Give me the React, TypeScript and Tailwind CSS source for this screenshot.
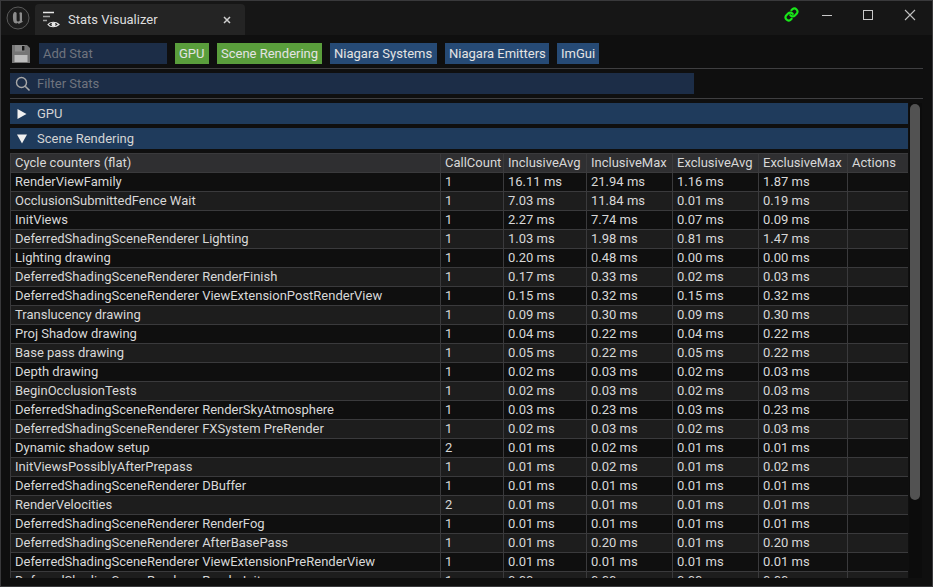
import React from "react";

const rows: string[][] = [
  ["RenderViewFamily", "1", "16.11 ms", "21.94 ms", "1.16 ms", "1.87 ms"],
  ["OcclusionSubmittedFence Wait", "1", "7.03 ms", "11.84 ms", "0.01 ms", "0.19 ms"],
  ["InitViews", "1", "2.27 ms", "7.74 ms", "0.07 ms", "0.09 ms"],
  ["DeferredShadingSceneRenderer Lighting", "1", "1.03 ms", "1.98 ms", "0.81 ms", "1.47 ms"],
  ["Lighting drawing", "1", "0.20 ms", "0.48 ms", "0.00 ms", "0.00 ms"],
  ["DeferredShadingSceneRenderer RenderFinish", "1", "0.17 ms", "0.33 ms", "0.02 ms", "0.03 ms"],
  ["DeferredShadingSceneRenderer ViewExtensionPostRenderView", "1", "0.15 ms", "0.32 ms", "0.15 ms", "0.32 ms"],
  ["Translucency drawing", "1", "0.09 ms", "0.30 ms", "0.09 ms", "0.30 ms"],
  ["Proj Shadow drawing", "1", "0.04 ms", "0.22 ms", "0.04 ms", "0.22 ms"],
  ["Base pass drawing", "1", "0.05 ms", "0.22 ms", "0.05 ms", "0.22 ms"],
  ["Depth drawing", "1", "0.02 ms", "0.03 ms", "0.02 ms", "0.03 ms"],
  ["BeginOcclusionTests", "1", "0.02 ms", "0.03 ms", "0.02 ms", "0.03 ms"],
  ["DeferredShadingSceneRenderer RenderSkyAtmosphere", "1", "0.03 ms", "0.23 ms", "0.03 ms", "0.23 ms"],
  ["DeferredShadingSceneRenderer FXSystem PreRender", "1", "0.02 ms", "0.03 ms", "0.02 ms", "0.03 ms"],
  ["Dynamic shadow setup", "2", "0.01 ms", "0.02 ms", "0.01 ms", "0.01 ms"],
  ["InitViewsPossiblyAfterPrepass", "1", "0.01 ms", "0.02 ms", "0.01 ms", "0.02 ms"],
  ["DeferredShadingSceneRenderer DBuffer", "1", "0.01 ms", "0.01 ms", "0.01 ms", "0.01 ms"],
  ["RenderVelocities", "2", "0.01 ms", "0.01 ms", "0.01 ms", "0.01 ms"],
  ["DeferredShadingSceneRenderer RenderFog", "1", "0.01 ms", "0.01 ms", "0.01 ms", "0.01 ms"],
  ["DeferredShadingSceneRenderer AfterBasePass", "1", "0.01 ms", "0.20 ms", "0.01 ms", "0.20 ms"],
  ["DeferredShadingSceneRenderer ViewExtensionPreRenderView", "1", "0.01 ms", "0.01 ms", "0.01 ms", "0.01 ms"],
  ["DeferredShadingSceneRenderer RenderInit", "1", "0.00 ms", "0.00 ms", "0.00 ms", "0.00 ms"],
];

const header = ["Cycle counters (flat)", "CallCount", "InclusiveAvg", "InclusiveMax", "ExclusiveAvg", "ExclusiveMax", "Actions"];

function Row({ cells, bg }: { cells: string[]; bg: string }) {
  return (
    <div className={`grid grid-cols-[430px_63px_83px_86px_86px_89px_61px] h-[19px] shrink-0 border-b border-[#3a3a3c] ${bg}`}>
      {cells.map((c, i) => (
        <div
          key={i}
          className={`pl-1 leading-[18px] whitespace-nowrap overflow-hidden ${i < 6 ? "border-r border-[#3a3a3c]" : ""}`}
        >
          {c}
        </div>
      ))}
    </div>
  );
}

function Chip({ label, green, width }: { label: string; green?: boolean; width: string }) {
  return (
    <div className={`h-[21px] pl-1 leading-[21px] whitespace-nowrap overflow-hidden ${width} ${green ? "bg-[#5a9e3c]" : "bg-[#264a75]"} text-[#e4e4e4]`}>
      {label}
    </div>
  );
}

function Section({ label, open }: { label: string; open?: boolean }) {
  return (
    <div className="h-[21px] w-[899px] bg-[#1f3b5c] flex items-center text-[#d4d4d4] shrink-0">
      <svg width="10" height="10" viewBox="0 0 10 10" className="ml-[7px] mr-[10px]">
        {open ? <path d="M0 0.5H10L5 9.5Z" fill="#f0f0f0" /> : <path d="M0.5 0L9.5 5L0.5 10Z" fill="#f0f0f0" />}
      </svg>
      <span>{label}</span>
    </div>
  );
}

export default function App() {
  return (
    <div className="w-[933px] h-[587px] overflow-hidden bg-[#0f0f0f] border border-[#39393b] flex flex-col text-[13px] text-[#d6d6d6] font-['Roboto',sans-serif] antialiased">
      {/* Title bar */}
      <div className="h-[34px] bg-[#161616] flex items-end shrink-0">
        <div className="w-[34px] h-[34px] flex items-center justify-center">
          <svg width="24" height="24" viewBox="0 0 24 24">
            <circle cx="12" cy="12" r="11" fill="#1c1c1c" stroke="#5a5a5a" strokeWidth="1" />
            <path d="M8 6.5C6.8 8 6.8 9.5 7.2 14.5C7.5 17 10 18.5 12 16.8L12.6 18L17 15.8L16 15V6.8C15 6 14 6 13.2 7C13.8 7.8 13.8 9 13.8 14.5C13 15.8 11 15.8 10.6 14.2V7C10 6 8.8 5.8 8 6.5Z" fill="#8c8c8c" />
          </svg>
        </div>
        <div className="w-[210px] h-[31px] bg-[#242424] rounded-t-[4px] flex items-center">
          <svg width="18" height="20" viewBox="0 0 18 20" className="ml-2 mr-[7px]">
            <path d="M0 2.5H11" stroke="#e8e8e8" strokeWidth="1.5" fill="none" />
            <path d="M0 6.5H7" stroke="#a0a0a0" strokeWidth="1.5" fill="none" />
            <path d="M0 10.5H4" stroke="#a0a0a0" strokeWidth="1.5" fill="none" />
            <path d="M5 14.5C7 11.5 13 11.5 16 14.5C13 17.5 7 17.5 5 14.5Z" stroke="#e8e8e8" strokeWidth="1.2" fill="none" />
            <circle cx="10.5" cy="14.5" r="2" fill="#e8e8e8" />
          </svg>
          <span className="text-[#dedede]">Stats Visualizer</span>
          <svg width="8" height="8" viewBox="0 0 8 8" className="ml-[65px]">
            <path d="M1 1L7 7M7 1L1 7" stroke="#cfcfcf" strokeWidth="1.5" />
          </svg>
        </div>
        <div className="ml-auto h-full flex items-center">
          <svg width="15" height="15" viewBox="0 0 24 24" fill="none" stroke="#19e619" strokeWidth="3.4" strokeLinecap="round" strokeLinejoin="round" className="mr-[22px] mb-[7px]">
            <path d="M10 13a5 5 0 0 0 7.5.5l3-3a5 5 0 0 0-7-7l-1.7 1.7" />
            <path d="M14 11a5 5 0 0 0-7.5-.5l-3 3a5 5 0 0 0 7 7l1.7-1.7" />
          </svg>
          <svg width="12" height="12" viewBox="0 0 12 12" className="mr-[29px] mb-[6px]">
            <path d="M1 6.5H11" stroke="#c8c8c8" strokeWidth="1" />
          </svg>
          <svg width="12" height="12" viewBox="0 0 12 12" className="mr-[30px] mb-[6px]">
            <rect x="1.5" y="1.5" width="9" height="9" fill="none" stroke="#c8c8c8" strokeWidth="1" />
          </svg>
          <svg width="12" height="12" viewBox="0 0 12 12" className="mr-[16px] mb-[7px]">
            <path d="M1 1L11 11M11 1L1 11" stroke="#c0c0c0" strokeWidth="1.1" />
          </svg>
        </div>
      </div>

      {/* Toolbar */}
      <div className="h-[34px] mx-[9px] flex items-start shrink-0 border-b border-[#3f3f41] pt-[8px]">
        <svg width="20" height="20" viewBox="0 0 20 20" className="ml-[1px] mr-[8px] mt-[1px]">
          <path d="M1 1H16L19 4V19H1Z" fill="#757575" />
          <rect x="4" y="1" width="10" height="6.5" fill="#8c8c8c" />
          <rect x="11" y="2" width="2.5" height="4.5" fill="#161616" />
          <rect x="3.5" y="11" width="13" height="7" fill="#bdbdbd" />
        </svg>
        <div className="w-[128px] h-[21px] bg-[#1c2d47] pl-1 leading-[21px] text-[#6f747e] mr-2">Add Stat</div>
        <div className="flex gap-2">
          <Chip label="GPU" green width="w-[34px]" />
          <Chip label="Scene Rendering" green width="w-[105px]" />
          <Chip label="Niagara Systems" width="w-[107px]" />
          <Chip label="Niagara Emitters" width="w-[104px]" />
          <Chip label="ImGui" width="w-[42px]" />
        </div>
      </div>

      {/* Filter */}
      <div className="h-[30px] mx-[9px] pt-[4px] border-b border-[#3f3f41] shrink-0">
        <div className="w-[684px] h-[21px] bg-[#1c2d47] flex items-center text-[#6f747e]">
          <svg width="16" height="16" viewBox="0 0 16 16" className="ml-[5px] mr-[6px]">
            <circle cx="6.5" cy="6.5" r="5" fill="none" stroke="#a8a8a8" strokeWidth="1.4" />
            <path d="M10.2 10.2L14.5 14.5" stroke="#a8a8a8" strokeWidth="1.6" />
          </svg>
          <span>Filter Stats</span>
        </div>
      </div>

      {/* Body */}
      <div className="flex-1 min-h-0 flex pl-[9px] pt-1 pb-[8px] pr-[10px]">
        <div className="w-[899px] flex flex-col gap-1 overflow-hidden">
          <Section label="GPU" />
          <Section label="Scene Rendering" open />
          <div className="w-[899px] flex-1 min-h-0 overflow-hidden border-l border-r border-t border-[#3a3a3c] text-[#d8d8d8]">
            <Row cells={header} bg="bg-[#2f2f31]" />
            {rows.map((r, i) => (
              <Row key={i} cells={[...r, ""]} bg={i % 2 === 0 ? "bg-[#0f0f0f]" : "bg-[#1d1d1d]"} />
            ))}
          </div>
        </div>
        <div className="w-[13px] ml-[1px] pl-[1px] pr-[2px] pt-[1px] bg-[#0c0c0c]">
          <div className="h-[396px] bg-[#525252] rounded-[5px]" />
        </div>
      </div>
    </div>
  );
}
